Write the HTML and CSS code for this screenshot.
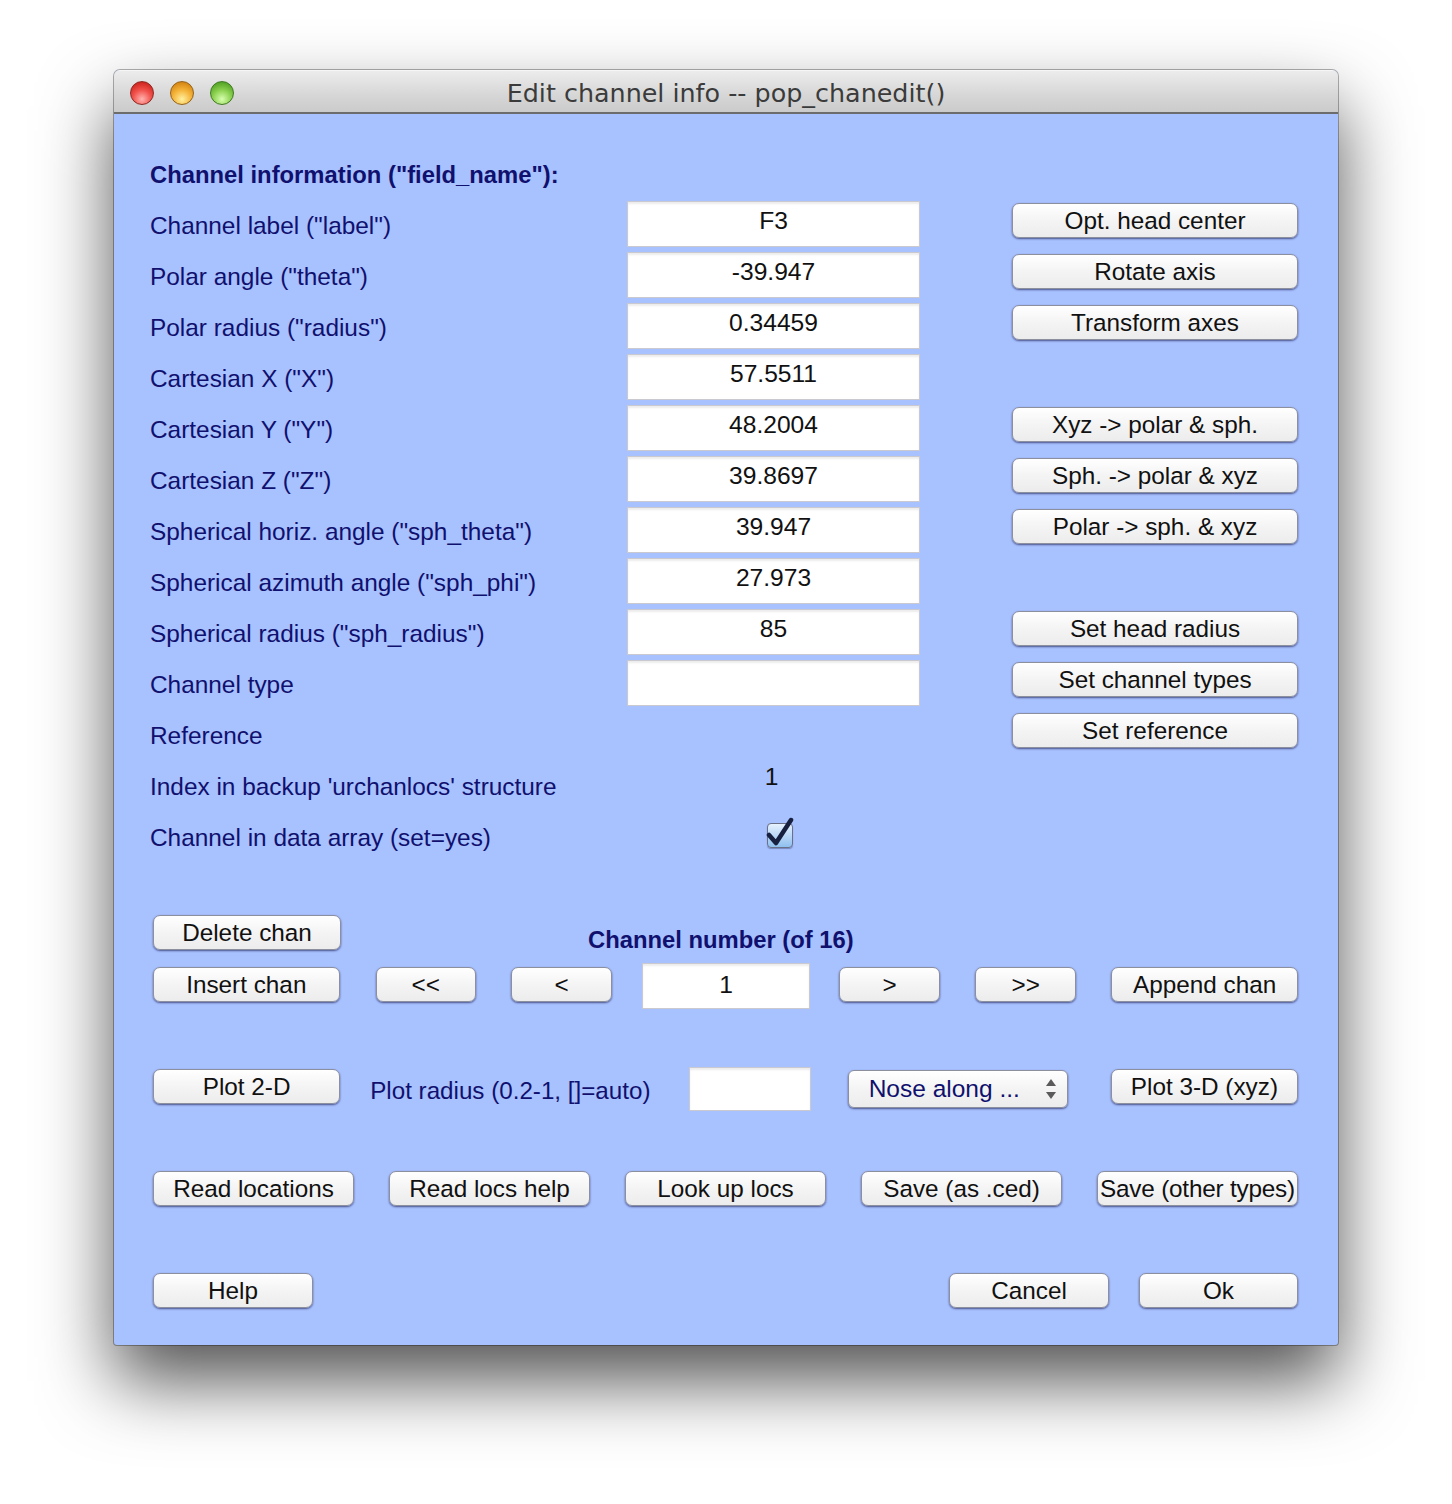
FILE: index.html
```html
<!DOCTYPE html>
<html>
<head>
<meta charset="utf-8">
<link rel="stylesheet" href="styles.css">
</head>
<body>
<div class="window">
  <div class="titlebar">
    <div class="lights">
      <span class="light red"></span>
      <span class="light yellow"></span>
      <span class="light green"></span>
    </div>
    <div class="title">Edit channel info -- pop_chanedit()</div>
  </div>
  <div class="content">
    <div class="header">Channel information ("field_name"):</div>
    <div class="form">
      <div class="label">Channel label ("label")</div>
      <div class="edit">F3</div>
      <div class="btn side">Opt. head center</div>

      <div class="label">Polar angle ("theta")</div>
      <div class="edit">-39.947</div>
      <div class="btn side">Rotate axis</div>

      <div class="label">Polar radius ("radius")</div>
      <div class="edit">0.34459</div>
      <div class="btn side">Transform axes</div>

      <div class="label">Cartesian X ("X")</div>
      <div class="edit">57.5511</div>
      <div class="empty"></div>

      <div class="label">Cartesian Y ("Y")</div>
      <div class="edit">48.2004</div>
      <div class="btn side">Xyz -&gt; polar &amp; sph.</div>

      <div class="label">Cartesian Z ("Z")</div>
      <div class="edit">39.8697</div>
      <div class="btn side">Sph. -&gt; polar &amp; xyz</div>

      <div class="label">Spherical horiz. angle ("sph_theta")</div>
      <div class="edit">39.947</div>
      <div class="btn side">Polar -&gt; sph. &amp; xyz</div>

      <div class="label">Spherical azimuth angle ("sph_phi")</div>
      <div class="edit">27.973</div>
      <div class="empty"></div>

      <div class="label">Spherical radius ("sph_radius")</div>
      <div class="edit">85</div>
      <div class="btn side">Set head radius</div>

      <div class="label">Channel type</div>
      <div class="edit"></div>
      <div class="btn side">Set channel types</div>

      <div class="label">Reference</div>
      <div class="empty"></div>
      <div class="btn side">Set reference</div>

      <div class="label">Index in backup 'urchanlocs' structure</div>
      <div class="value">1</div>
      <div class="empty"></div>

      <div class="label">Channel in data array (set=yes)</div>
      <div class="checkcell">
        <span class="checkbox">
          <svg class="check" width="34" height="34" viewBox="0 0 34 34">
            <path d="M6 18 L13 26 L28 3" fill="none" stroke="#17213f" stroke-width="4.5" stroke-linecap="round" stroke-linejoin="round"/>
          </svg>
        </span>
      </div>
      <div class="empty"></div>
    </div>

    <div class="bottom">
      <div class="row row-a">
        <div class="btn w188">Delete chan</div>
        <div class="chnum">Channel number (of 16)</div>
      </div>
      <div class="row row-b">
        <div class="btn w188">Insert chan</div>
        <div class="btn w101 ml36">&lt;&lt;</div>
        <div class="btn w102 ml35">&lt;</div>
        <div class="edit numbox">1</div>
        <div class="btn w102 ml29">&gt;</div>
        <div class="btn w102 ml35">&gt;&gt;</div>
        <div class="btn w188 ml35">Append chan</div>
      </div>
      <div class="row row-c">
        <div class="btn w188">Plot 2-D</div>
        <div class="plotlabel">Plot radius (0.2-1, []=auto)</div>
        <div class="edit radiusbox"></div>
        <div class="popup">
          <span>Nose along ...</span>
          <span class="arrows">
            <svg width="12" height="24" viewBox="0 0 12 24">
              <path d="M1 9 L6 2 L11 9 Z" fill="#5a5a5a"/>
              <path d="M1 15 L6 22 L11 15 Z" fill="#5a5a5a"/>
            </svg>
          </span>
        </div>
        <div class="btn w188 ml43">Plot 3-D (xyz)</div>
      </div>
      <div class="row row-d">
        <div class="btn w202">Read locations</div>
        <div class="btn w202 ml35">Read locs help</div>
        <div class="btn w202 ml35">Look up locs</div>
        <div class="btn w202 ml35">Save (as .ced)</div>
        <div class="btn w202 ml35 tight">Save (other types)</div>
      </div>
      <div class="row row-e">
        <div class="btn w160">Help</div>
        <div class="btn w160 push">Cancel</div>
        <div class="btn w159 ml30">Ok</div>
      </div>
    </div>
  </div>
</div>
</body>
</html>
```

FILE: styles.css
```css
html, body {
  margin: 0;
  padding: 0;
  background: #ffffff;
}

body {
  width: 1452px;
  height: 1504px;
  overflow: hidden;
  font-family: "Liberation Sans", Arial, sans-serif;
}

.window {
  margin: 70px 0 0 114px;
  width: 1224px;
  height: 1275px;
  border-radius: 6px 6px 3px 3px;
  background: #a8c1ff;
  box-shadow: 0 36px 72px rgba(0, 0, 0, 0.68), 0 0 0 1px rgba(0, 0, 0, 0.3);
  overflow: hidden;
  display: flex;
  flex-direction: column;
}

.titlebar {
  height: 41px;
  border-bottom: 2px solid #6c6c6c;
  background: linear-gradient(#ececec, #d6d6d6 60%, #cbcbcb);
  border-top: 1px solid #f6f6f6;
  box-sizing: content-box;
  display: flex;
  align-items: center;
  position: relative;
}

.lights {
  display: flex;
  gap: 16px;
  padding-left: 16px;
  padding-top: 2px;
}

.light {
  width: 24px;
  height: 24px;
  border-radius: 50%;
  box-sizing: border-box;
}

.red {
  background: radial-gradient(circle at 50% 78%, #ffb4b0 0%, #f2524c 45%, #c81c16 90%);
  border: 1px solid #8c2a25;
}

.yellow {
  background: radial-gradient(circle at 50% 78%, #fff0a0 0%, #f5b43a 45%, #cf7d0c 90%);
  border: 1px solid #94621a;
}

.green {
  background: radial-gradient(circle at 50% 78%, #d8ffb0 0%, #8cd150 45%, #4a9a1e 90%);
  border: 1px solid #3f7a22;
}

.title {
  position: absolute;
  left: 0;
  right: 0;
  top: 7px;
  text-align: center;
  font-family: "DejaVu Sans", sans-serif;
  font-size: 25.4px;
  color: #3b3b3b;
}

.content {
  flex: 1;
  padding: 46px 40px 0 36px;
  color: #10106e;
}

.header {
  font-weight: bold;
  font-size: 23.8px;
  line-height: 30px;
  height: 30px;
  margin-bottom: 9px;
}

.form {
  display: grid;
  grid-template-columns: 477px 293px 1fr;
  grid-auto-rows: 51px;
}

.label {
  font-size: 24.4px;
  line-height: 30px;
  padding-top: 12px;
  white-space: nowrap;
}

.edit {
  background: #ffffff;
  border: 1px solid #c9c9cf;
  box-shadow: inset 0 2px 2px rgba(0, 0, 0, 0.08);
  box-sizing: border-box;
  color: #111111;
  font-size: 24.6px;
  text-align: center;
}

.form .edit {
  margin-top: 2px;
  height: 46px;
  line-height: 37px;
}

.value {
  text-align: center;
  color: #111111;
  font-size: 24.6px;
  line-height: 30px;
  padding-top: 2px;
  padding-right: 4px;
}

.checkcell {
  position: relative;
}

.checkbox {
  position: absolute;
  left: 140px;
  top: 12px;
  width: 26px;
  height: 25px;
  box-sizing: border-box;
  border: 1px solid #6a7088;
  border-radius: 4px;
  background: linear-gradient(#e6f2ff, #b7d6f7 55%, #8fc0ee);
  box-shadow: 0 1px 1px rgba(0, 0, 40, 0.3);
}

.check {
  position: absolute;
  left: -5px;
  top: -7px;
}

.btn {
  height: 35px;
  box-sizing: border-box;
  border: 1px solid #8c8f9e;
  border-radius: 7px;
  background: linear-gradient(#ffffff, #f4f4f4 50%, #ececec);
  box-shadow: 0 1px 2px rgba(10, 10, 60, 0.6);
  color: #111111;
  font-size: 24.3px;
  line-height: 33px;
  text-align: center;
  white-space: nowrap;
  overflow: hidden;
}

.side {
  margin-top: 4px;
  width: 286px;
  justify-self: end;
}

.bottom {
  padding-left: 3px;
  margin-top: 53px;
}

.row {
  display: flex;
  align-items: flex-start;
}

.row-a {
  height: 35px;
}

.chnum {
  margin-left: 247px;
  font-weight: bold;
  font-size: 23.8px;
  line-height: 30px;
  padding-top: 10px;
  white-space: nowrap;
}

.row-b {
  margin-top: 13px;
  height: 46px;
}

.row-b .btn {
  margin-top: 4px;
}

.numbox {
  margin-left: 30px;
  width: 169px;
  height: 46px;
  line-height: 42px;
}

.row-c {
  margin-top: 58px;
  height: 44px;
}

.row-c .btn {
  margin-top: 2px;
}

.plotlabel {
  width: 349px;
  flex-shrink: 0;
  box-sizing: border-box;
  padding-left: 30px;
  font-size: 24.2px;
  line-height: 30px;
  margin-top: 9px;
  white-space: nowrap;
}

.radiusbox {
  width: 122px;
  height: 44px;
}

.popup {
  margin-left: 37px;
  margin-top: 3px;
  width: 221px;
  height: 38px;
  box-sizing: border-box;
  border: 1px solid #8c8f9e;
  border-radius: 6px;
  background: linear-gradient(#ffffff, #f4f4f4 50%, #ececec);
  box-shadow: 0 1px 2px rgba(10, 10, 60, 0.6);
  display: flex;
  align-items: center;
  justify-content: space-between;
  padding: 0 10px 0 20px;
  font-size: 24.5px;
  color: #10106e;
}

.arrows {
  display: flex;
  align-items: center;
}

.row-d {
  margin-top: 60px;
}

.row-e {
  margin-top: 67px;
}

.w101 { width: 101px; }
.w102 { width: 102px; }
.w159 { width: 159px; }
.w160 { width: 160px; }
.w188 { width: 188px; }
.w202 { width: 202px; }
.ml29 { margin-left: 29px; }
.ml30 { margin-left: 30px; }
.ml35 { margin-left: 35px; }
.ml36 { margin-left: 36px; }
.ml43 { margin-left: 43px; }
.push { margin-left: auto; }
.tight { letter-spacing: -0.2px; }
```
